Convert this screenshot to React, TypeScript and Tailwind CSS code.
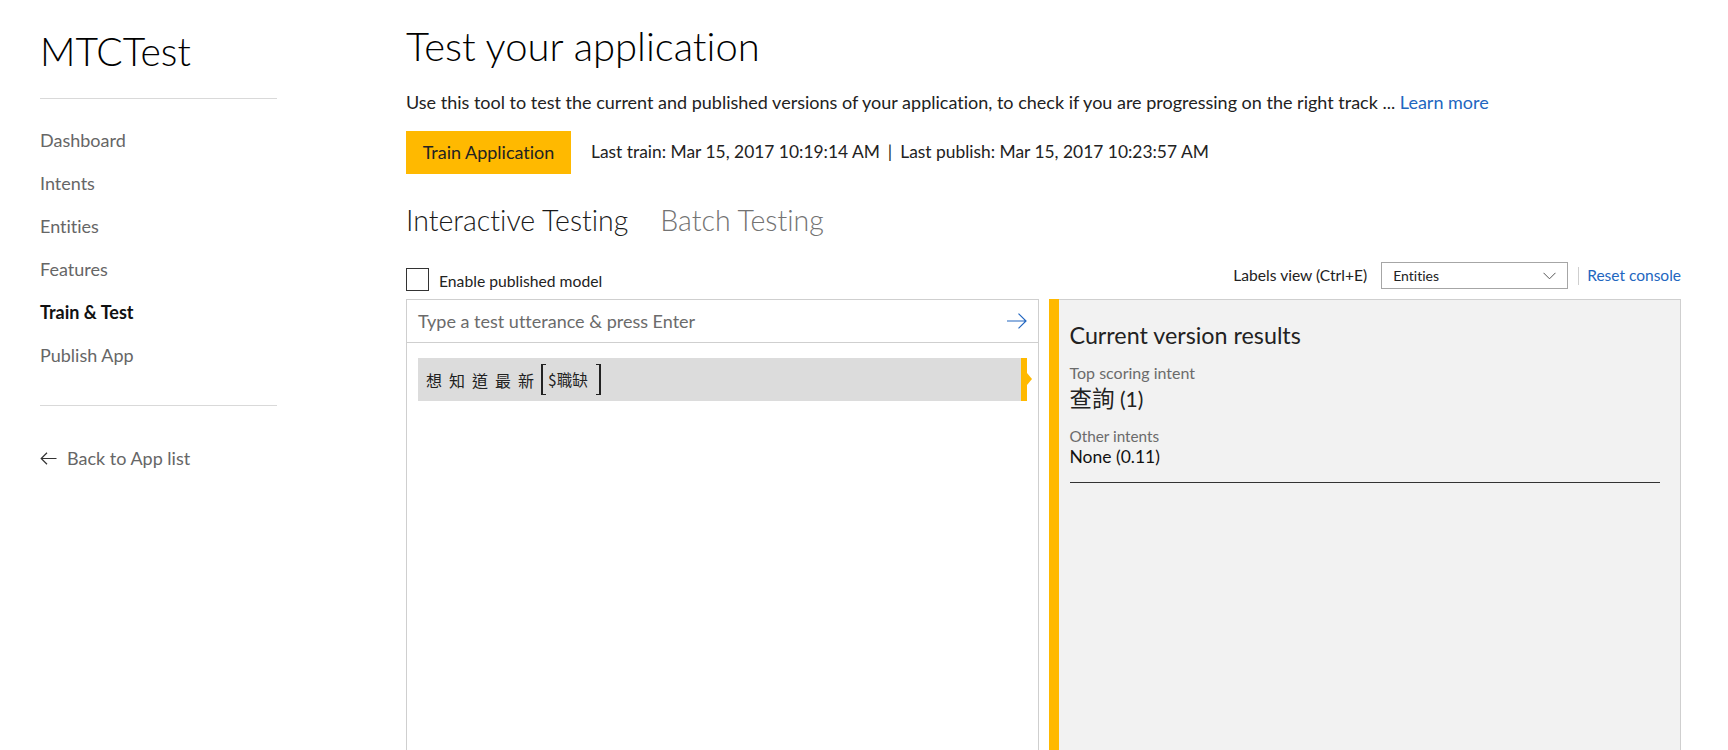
const navItems = ['Dashboard', 'Intents', 'Entities', 'Features', 'Train & Test', 'Publish App']

function Sidebar() {
  return (
    <aside className="w-[406px] shrink-0 pl-[40px]">
      <div className="w-[237px]">
        <h1 className="mt-[26px] text-[39px] font-light leading-[50px] text-black">MTCTest</h1>
        <div className="mt-[22px] h-px bg-[#d9d9d9]" />
        <nav className="mt-[20px] flex flex-col">
          {navItems.map((item) =>
            item === 'Train & Test' ? (
              <a key={item} className="h-[43px] text-[18px] font-bold leading-[43px] text-[#111]">
                {item}
              </a>
            ) : (
              <a key={item} className="h-[43px] text-[18px] leading-[43px] text-[#666]">
                {item}
              </a>
            ),
          )}
        </nav>
        <div className="mt-[28px] h-px bg-[#d9d9d9]" />
        <a className="mt-[31px] flex h-[43px] items-center gap-[10px] text-[18px] text-[#666]">
          <svg width="17" height="13" viewBox="0 0 17 13" fill="none" stroke="#333" strokeWidth="1.2">
            <path d="M16.5 6.5H1M7 0.8L1.2 6.5L7 12.2" />
          </svg>
          Back to App list
        </a>
      </div>
    </aside>
  )
}

function Bracket({ side }: { side: 'l' | 'r' }) {
  return side === 'l' ? (
    <span className="block h-[31px] w-[5px] border-y-[1.5px] border-l-2 border-[#222]" />
  ) : (
    <span className="block h-[31px] w-[5px] border-y-[1.5px] border-r-2 border-[#222]" />
  )
}

function Utterance() {
  const chars = ['想', '知', '道', '最', '新']
  return (
    <div className="relative mx-[11px] mt-[15px] flex h-[43px] items-center bg-[#dcdcdc] pl-[8px] text-[#222]">
      <div className="flex items-center gap-[7px] text-[16px] [font-family:'Noto_Sans_CJK_TC',sans-serif]">
        {chars.map((c) => (
          <span key={c}>{c}</span>
        ))}
      </div>
      <div className="ml-[7px] flex items-center">
        <Bracket side="l" />
        <span className="ml-[2px] text-[15.5px] [font-family:'Noto_Sans_CJK_TC',sans-serif]">$職缺</span>
        <span className="ml-[8px] block">
          <Bracket side="r" />
        </span>
      </div>
      <div className="absolute right-0 top-0 h-full w-[6px] bg-[#ffb900]" />
      <div className="absolute right-[-5px] top-[15px] h-0 w-0 border-y-[6px] border-l-[5px] border-y-transparent border-l-[#ffb900]" />
    </div>
  )
}

function ResultsPanel() {
  return (
    <div className="flex min-h-0">
      <div className="w-[10px] shrink-0 bg-[#ffb900]" />
      <div className="flex-1 border-r border-t border-[#cfcfcf] bg-[#f2f2f2] pl-[11px] pr-[20px] pt-[20px]">
        <h3 className="text-[23.3px] leading-[30px] text-[#222]">Current version results</h3>
        <div className="mt-[13px] text-[16px] leading-[20px] text-[#6b6b6b]">Top scoring intent</div>
        <div className="mt-[2px] text-[21px] leading-[24px] text-[#222]">
          <span className="text-[22.5px] [font-family:'Noto_Sans_CJK_TC',sans-serif]">查詢</span> (1)
        </div>
        <div className="mt-[15px] text-[15.3px] leading-[20px] text-[#6b6b6b]">Other intents</div>
        <div className="text-[17.5px] leading-[21px] text-[#111]">None (0.11)</div>
        <div className="mt-[15px] h-px bg-[#333]" />
      </div>
    </div>
  )
}

export default function App() {
  return (
    <div className="flex h-[750px] overflow-hidden bg-white [font-family:Lato,'Noto_Sans_CJK_TC',sans-serif] [font-variant-ligatures:none]">
      <Sidebar />
      <main className="flex min-w-0 flex-1 flex-col pr-[47px]">
        <h2 className="mt-[22px] text-[40px] font-light leading-[48px] text-black">Test your application</h2>
        <p className="mt-[20px] text-[18px] leading-[24px] text-[#222]">
          Use this tool to test the current and published versions of your application, to check if you are
          progressing on the right track ... <a className="text-[#2266c0]">Learn more</a>
        </p>
        <div className="mt-[17px] flex items-center">
          <button className="h-[43px] w-[165px] bg-[#ffb900] text-[18px] text-[#222]">Train Application</button>
          <span className="ml-[20px] text-[17.4px] text-[#222]">
            Last train: Mar 15, 2017 10:19:14 AM<span className="mx-[8px]">|</span>Last publish: Mar 15, 2017
            10:23:57 AM
          </span>
        </div>
        <div className="mt-[29px] flex gap-[32px] text-[28.5px] font-light leading-[34px]">
          <span className="text-[#1a1a1a]">Interactive Testing</span>
          <span className="text-[#737373]">Batch Testing</span>
        </div>
        <div className="mt-[25px] flex h-[29px] justify-between">
          <label className="flex items-end gap-[10px] self-end">
            <span className="block h-[23px] w-[23px] border border-[#333] bg-white" />
            <span className="text-[15.7px] leading-[20px] text-[#222]">Enable published model</span>
          </label>
          <div className="flex h-[27px] items-center">
            <span className="text-[15.6px] text-[#222]">Labels view (Ctrl+E)</span>
            <div className="ml-[14px] flex h-[27px] w-[187px] items-center justify-between border border-[#a6a6a6] pl-[11px] pr-[11px]">
              <span className="text-[14px] text-[#222]">Entities</span>
              <svg width="13" height="8" viewBox="0 0 13 8" fill="none" stroke="#555" strokeWidth="1">
                <path d="M0.5 0.8L6.5 6.8L12.5 0.8" />
              </svg>
            </div>
            <div className="ml-[10px] h-[18px] w-px bg-[#cfcfcf]" />
            <a className="ml-[8px] text-[15.5px] text-[#2266c0]">Reset console</a>
          </div>
        </div>
        <div className="mt-[8px] grid min-h-0 flex-1 grid-cols-2 gap-[10px]">
          <div className="flex min-h-0 flex-col border-l border-r border-t border-[#cfcfcf]">
            <div className="flex h-[43px] shrink-0 items-center justify-between border-b border-[#cfcfcf] pl-[11px] pr-[11px]">
              <span className="text-[18px] text-[#6b6b6b]">Type a test utterance &amp; press Enter</span>
              <svg width="20" height="16" viewBox="0 0 20 16" fill="none" stroke="#2266c0" strokeWidth="1.2">
                <path d="M0 8H19M11.5 0.6L19 8L11.5 15.4" />
              </svg>
            </div>
            <Utterance />
          </div>
          <ResultsPanel />
        </div>
      </main>
    </div>
  )
}
